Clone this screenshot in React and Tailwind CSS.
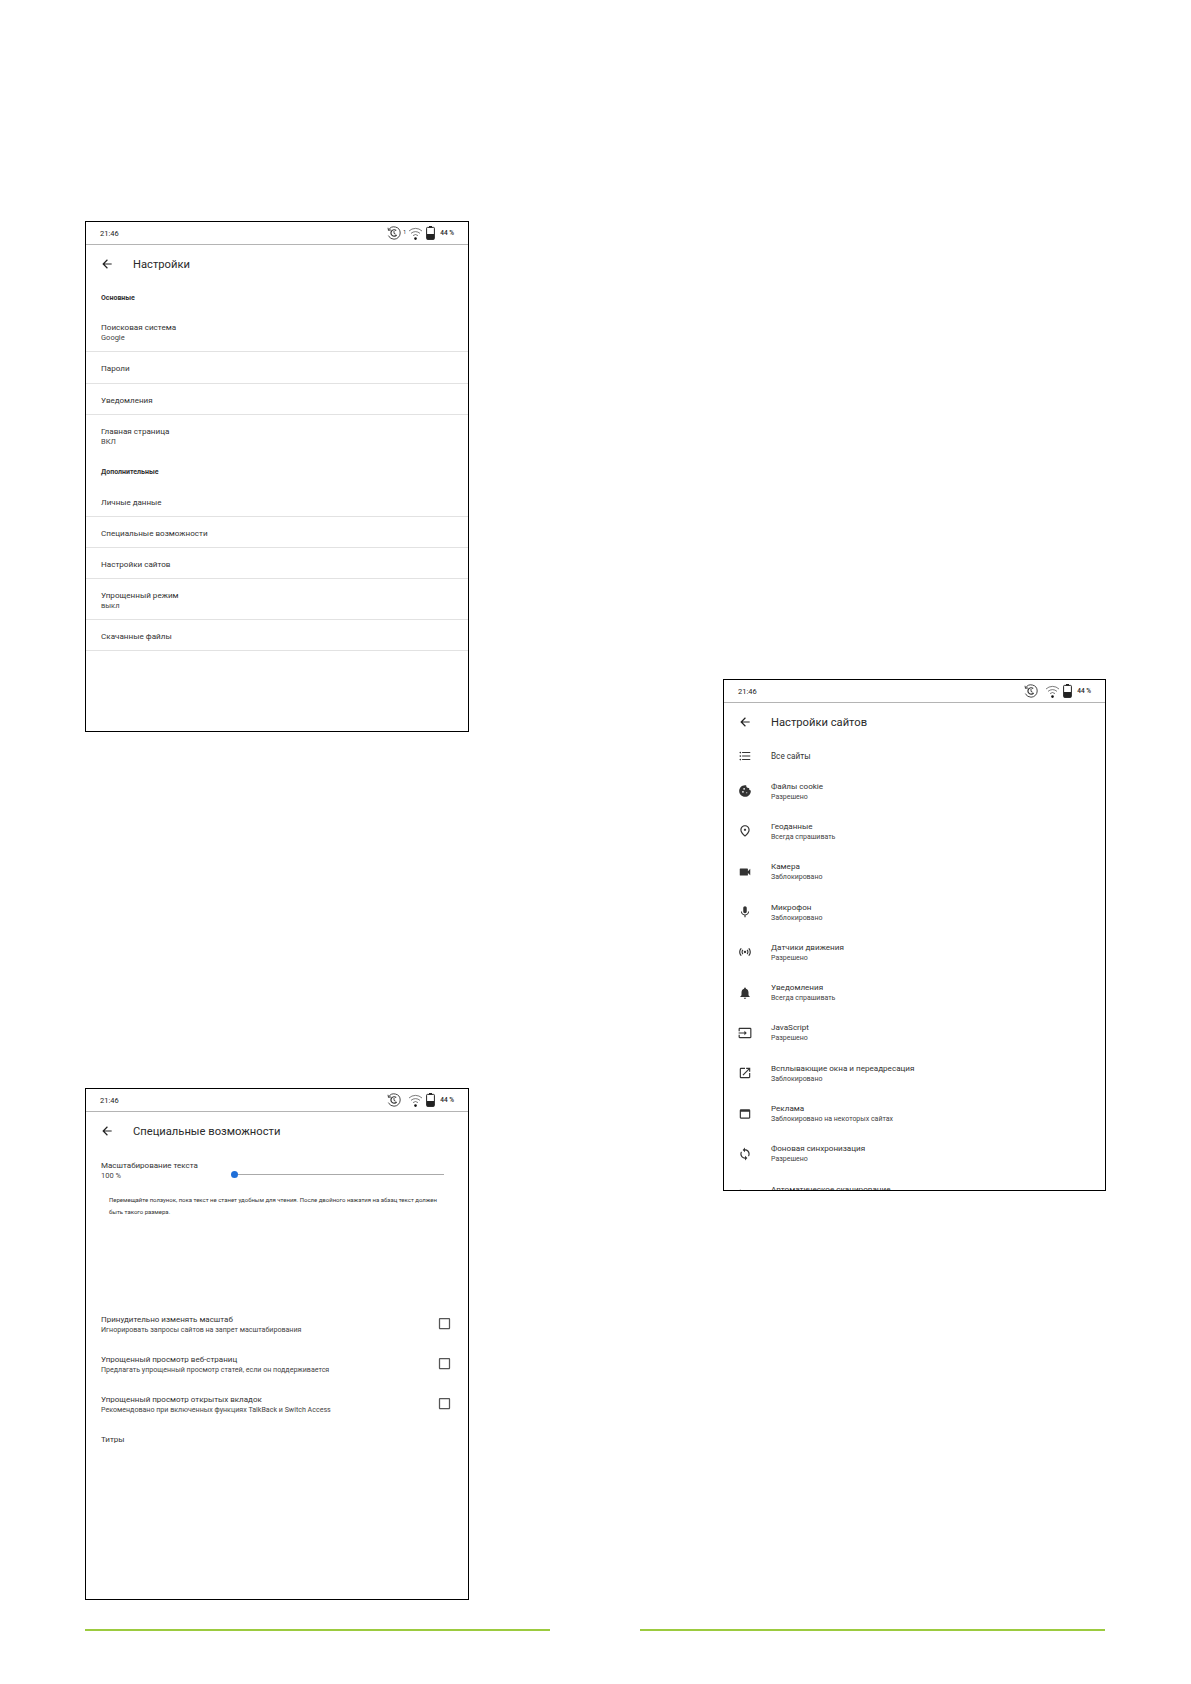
import React from 'react';
import {
  MdArrowBack,
  MdFormatListBulleted,
  MdCookie,
  MdOutlinePlace,
  MdVideocam,
  MdMic,
  MdSensors,
  MdNotifications,
  MdInput,
  MdOpenInNew,
  MdOutlineWebAsset,
  MdSync,
  MdCheckBoxOutlineBlank,
} from 'react-icons/md';

const RefreshIcon = () => (
  <svg width="16" height="16" viewBox="0 0 16 16" fill="none" stroke="#333" strokeWidth="0.9">
    <path d="M2.5 5.2A6.2 6.2 0 0 1 14.2 8a6.2 6.2 0 0 1-6.2 6.2 6.2 6.2 0 0 1-5.6-3.6" />
    <path d="M2 2.8l.5 2.6 2.6-.5" />
    <path d="M10.2 5.5A3.2 3.2 0 1 0 10.6 10" strokeWidth="1.2" />
    <path d="M8 6v2.4l1.6.8" />
  </svg>
);

const WifiIcon = () => (
  <svg width="15" height="15" viewBox="0 0 15 15" fill="none" stroke="#444" strokeWidth="0.7">
    <path d="M1 5a9.4 9.4 0 0 1 13 0" />
    <path d="M3 7.4a6.6 6.6 0 0 1 9 0" />
    <path d="M5 9.6a3.8 3.8 0 0 1 5 0" />
    <circle cx="7.5" cy="12.6" r="1.3" fill="#111" stroke="none" />
  </svg>
);

const BatteryIcon = () => (
  <svg width="9" height="14" viewBox="0 0 9 14" fill="none">
    <rect x="3" y="0" width="3" height="1.5" fill="#222" />
    <rect x="0.6" y="1.4" width="7.8" height="12" rx="0.8" stroke="#222" strokeWidth="1" />
    <rect x="1" y="8" width="7" height="5.4" fill="#222" />
  </svg>
);

const StatusBar = ({ tick }) => (
  <div className="h-[23px] shrink-0 border-b border-[#b4b4b4] flex items-center pl-[14px] pr-[14px] text-[7.5px] text-[#222]">
    <span className="flex-1 pt-[1px]">21:46</span>
    <RefreshIcon />
    <span className="w-[5px] text-center text-[5px]">{tick ? '1' : ''}</span>
    <span className="ml-[1px]"><WifiIcon /></span>
    <span className="ml-[3px]"><BatteryIcon /></span>
    <span className="ml-[5px] pt-[2px] text-[6.5px] font-medium">44 %</span>
  </div>
);

const Header = ({ title }) => (
  <div className="h-[38px] shrink-0 flex items-center pl-[14px]">
    <MdArrowBack className="w-[14px] h-[14px] text-[#222]" />
    <span className="ml-[19px] pt-[2px] text-[11.2px] text-[#2a2a2a]">{title}</span>
  </div>
);

const Frame = ({ size, children }) => (
  <div className={`${size} border border-black bg-white flex flex-col overflow-hidden font-['Roboto',sans-serif]`}>
    {children}
  </div>
);

const Section = ({ label, className }) => (
  <div className={`flex items-center pl-[15px] pt-[2px] text-[7px] font-bold text-[#333] ${className}`}>{label}</div>
);

const Row = ({ title, sub, height, line = true, small }) => (
  <div
    className={`shrink-0 flex flex-col justify-center pl-[15px] pt-[2px] ${height} ${line ? 'border-b border-[#e2e2e2]' : ''}`}
  >
    <div className={`${small ? 'text-[8px]' : 'text-[8.1px]'} leading-[11px] text-[#333]`}>{title}</div>
    {sub && <div className="text-[7.5px] leading-[10px] text-[#444]">{sub}</div>}
  </div>
);

const SettingsFrame = () => (
  <Frame size="w-[384px] h-[511px]">
    <StatusBar tick />
    <Header title="Настройки" />
    <Section label="Основные" className="h-[28px]" />
    <Row title="Поисковая система" sub="Google" height="h-[41px]" />
    <Row title="Пароли" height="h-[32px]" />
    <Row title="Уведомления" height="h-[31px]" small />
    <Row title="Главная страница" sub="ВКЛ" height="h-[41px]" line={false} />
    <Section label="Дополнительные" className="h-[30px]" />
    <Row title="Личные данные" height="h-[31px]" small />
    <Row title="Специальные возможности" height="h-[31px]" />
    <Row title="Настройки сайтов" height="h-[31px]" />
    <Row title="Упрощенный режим" sub="выкл" height="h-[41px]" />
    <Row title="Скачанные файлы" height="h-[31px]" />
  </Frame>
);

const CheckRow = ({ title, sub }) => (
  <div className="h-[40px] shrink-0 flex items-center pl-[15px] pr-[16px]">
    <div className="flex-1">
      <div className="text-[8px] leading-[11px] text-[#333]">{title}</div>
      <div className="text-[7.1px] leading-[10px] text-[#444]">{sub}</div>
    </div>
    <MdCheckBoxOutlineBlank className="w-[15px] h-[15px] -mt-[1px] text-[#555]" />
  </div>
);

const AccessibilityFrame = () => (
  <Frame size="w-[384px] h-[512px]">
    <StatusBar />
    <Header title="Специальные возможности" />
    <div className="h-[31px] shrink-0 flex items-end pl-[15px] pr-[24px]">
      <div className="w-[130px] shrink-0">
        <div className="text-[8px] leading-[11px] text-[#333]">Масштабирование текста</div>
        <div className="text-[7.5px] leading-[10px] text-[#444]">100 %</div>
      </div>
      <div className="flex-1 h-px mb-[6px] bg-[#aaaaaa] flex items-center">
        <span className="w-[7px] h-[7px] rounded-full bg-[#1f6fd8]" />
      </div>
    </div>
    <p className="mt-[13px] pl-[23px] pr-[24px] text-[6px] leading-[12px] text-[#333] h-[110px] shrink-0">
      Перемещайте ползунок, пока текст не станет удобным для чтения. После двойного нажатия на абзац текст должен быть такого размера.
    </p>
    <CheckRow title="Принудительно изменять масштаб" sub="Игнорировать запросы сайтов на запрет масштабирования" />
    <CheckRow title="Упрощенный просмотр веб-страниц" sub="Предлагать упрощенный просмотр статей, если он поддерживается" />
    <CheckRow title="Упрощенный просмотр открытых вкладок" sub="Рекомендовано при включенных функциях TalkBack и Switch Access" />
    <div className="pl-[15px] mt-[10px] text-[8px] text-[#333]">Титры</div>
  </Frame>
);

const sites = [
  { Icon: MdCookie, title: 'Файлы cookie', sub: 'Разрешено' },
  { Icon: MdOutlinePlace, title: 'Геоданные', sub: 'Всегда спрашивать' },
  { Icon: MdVideocam, title: 'Камера', sub: 'Заблокировано' },
  { Icon: MdMic, title: 'Микрофон', sub: 'Заблокировано' },
  { Icon: MdSensors, title: 'Датчики движения', sub: 'Разрешено' },
  { Icon: MdNotifications, title: 'Уведомления', sub: 'Всегда спрашивать' },
  { Icon: MdInput, title: 'JavaScript', sub: 'Разрешено' },
  { Icon: MdOpenInNew, title: 'Всплывающие окна и переадресация', sub: 'Заблокировано' },
  { Icon: MdOutlineWebAsset, title: 'Реклама', sub: 'Заблокировано на некоторых сайтах' },
  { Icon: MdSync, title: 'Фоновая синхронизация', sub: 'Разрешено' },
  { Icon: MdFormatListBulleted, title: 'Автоматическое сканирование', sub: 'Разрешено' },
];

const SiteRow = ({ Icon, title, sub }) => (
  <div className="h-[40.3px] shrink-0 flex items-center pl-[14px]">
    <span className="w-[33px] shrink-0 flex">
      <Icon className="w-[14px] h-[14px] text-[#333]" />
    </span>
    <div>
      <div className="text-[8.1px] leading-[11px] text-[#333]">{title}</div>
      <div className="text-[7px] leading-[10px] text-[#444]">{sub}</div>
    </div>
  </div>
);

const SiteSettingsFrame = () => (
  <Frame size="w-[383px] h-[512px]">
    <StatusBar />
    <Header title="Настройки сайтов" />
    <div className="h-[30px] shrink-0 flex items-center pl-[14px]">
      <span className="w-[33px] shrink-0 flex">
        <MdFormatListBulleted className="w-[14px] h-[14px] text-[#333]" />
      </span>
      <span className="pt-[1px] text-[8.2px] text-[#333]">Все сайты</span>
    </div>
    {sites.map((s, i) => (
      <SiteRow key={i} {...s} />
    ))}
  </Frame>
);

export default function App() {
  return (
    <div className="w-[1191px] h-[1684px] bg-white flex pl-[85px] pt-[221px] gap-[90px]">
      <div className="w-[465px] flex flex-col">
        <SettingsFrame />
        <div className="h-[356px]" />
        <AccessibilityFrame />
        <div className="mt-[29px] h-[2px] bg-[#9ccb3f]" />
      </div>
      <div className="w-[465px] flex flex-col pt-[458px]">
        <div className="ml-[83px]">
          <SiteSettingsFrame />
        </div>
        <div className="mt-[438px] h-[2px] bg-[#9ccb3f]" />
      </div>
    </div>
  );
}
